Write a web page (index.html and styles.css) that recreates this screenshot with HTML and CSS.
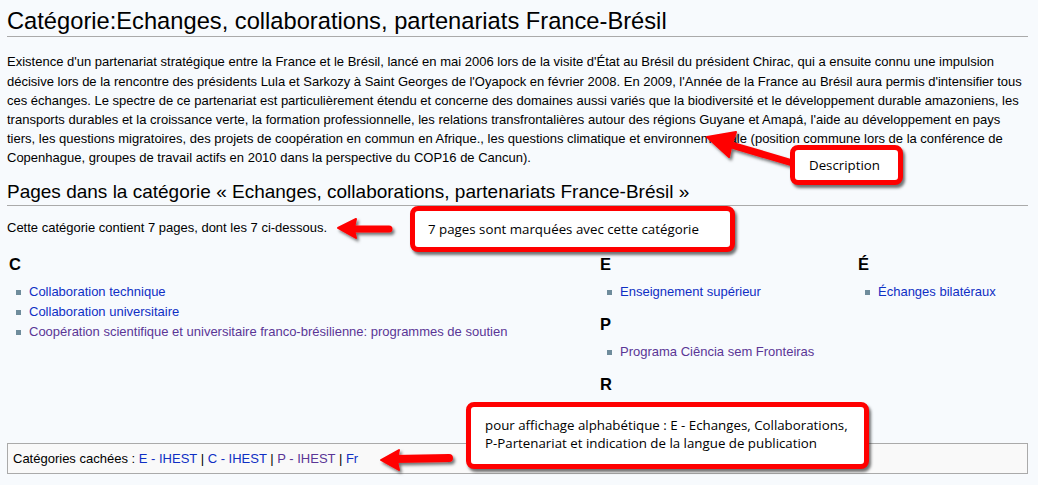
FILE: index.html
```html
<!DOCTYPE html>
<html lang="fr">
<head>
<meta charset="utf-8">
<title>Catégorie:Echanges, collaborations, partenariats France-Brésil</title>
<link rel="stylesheet" href="styles.css">
</head>
<body>
<div class="page">
  <h1 class="title">Catégorie:Echanges, collaborations, partenariats France-Brésil</h1>
  <p class="desc">Existence d'un partenariat stratégique entre la France et le Brésil, lancé en mai 2006 lors de la visite d'État au Brésil du président Chirac, qui a ensuite connu une impulsion décisive lors de la rencontre des présidents Lula et Sarkozy à Saint Georges de l'Oyapock en février 2008. En 2009, l'Année de la France au Brésil aura permis d'intensifier tous ces échanges. Le spectre de ce partenariat est particulièrement étendu et concerne des domaines aussi variés que la biodiversité et le développement durable amazoniens, les transports durables et la croissance verte, la formation professionnelle, les relations transfrontalières autour des régions Guyane et Amapá, l'aide au développement en pays tiers, les questions migratoires, des projets de coopération en commun en Afrique., les questions climatique et environnementale (position commune lors de la conférence de Copenhague, groupes de travail actifs en 2010 dans la perspective du COP16 de Cancun).</p>
  <h2 class="sub">Pages dans la catégorie « Echanges, collaborations, partenariats France-Brésil »</h2>
  <p class="count">Cette catégorie contient 7 pages, dont les 7 ci-dessous.</p>
  <div class="cols">
    <div class="col">
      <h3 class="letter">C</h3>
      <ul class="items">
        <li><a class="link" href="#">Collaboration technique</a></li>
        <li><a class="link" href="#">Collaboration universitaire</a></li>
        <li><a class="link visited" href="#">Coopération scientifique et universitaire franco-brésilienne: programmes de soutien</a></li>
      </ul>
    </div>
    <div class="col">
      <h3 class="letter">E</h3>
      <ul class="items">
        <li><a class="link" href="#">Enseignement supérieur</a></li>
      </ul>
      <h3 class="letter">P</h3>
      <ul class="items">
        <li><a class="link visited" href="#">Programa Ciência sem Fronteiras</a></li>
      </ul>
      <h3 class="letter">R</h3>
    </div>
    <div class="col">
      <h3 class="letter">É</h3>
      <ul class="items">
        <li><a class="link" href="#">Échanges bilatéraux</a></li>
      </ul>
    </div>
  </div>
  <div class="catlinks">Catégories cachées : <a class="link" href="#">E - IHEST</a> | <a class="link" href="#">C - IHEST</a> | <a class="link visited" href="#">P - IHEST</a> | <a class="link" href="#">Fr</a></div>

  <svg class="arrows" width="1038" height="485" viewBox="0 0 1038 485" xmlns="http://www.w3.org/2000/svg">
    <defs>
      <filter id="sh" x="-20%" y="-50%" width="140%" height="200%">
        <feDropShadow dx="2" dy="2.5" stdDeviation="1.5" flood-color="#000" flood-opacity="0.55"/>
      </filter>
    </defs>
    <g filter="url(#sh)" fill="#ff0000" stroke="#ff0000" stroke-linecap="round" stroke-linejoin="round">
      <line x1="796" y1="164" x2="728" y2="144" stroke-width="7"/>
      <path d="M707 137 L736 132 Q731 144 729 157 Z" stroke-width="2"/>
      <line x1="352" y1="229" x2="389" y2="229" stroke-width="7"/>
      <path d="M338 228 L356 219 Q353 229 356 238 Z" stroke-width="2"/>
      <line x1="394" y1="459" x2="449" y2="458" stroke-width="8"/>
      <path d="M381 460 L399 450 Q396 460 399 470 Z" stroke-width="2"/>
    </g>
  </svg>

  <div class="note note-desc">Description</div>
  <div class="note note-count">7 pages sont marquées avec cette catégorie</div>
  <div class="note note-alpha">pour affichage alphabétique : E - Echanges, Collaborations,<br>P-Partenariat et indication de la langue de publication</div>
</div>
</body>
</html>
```
FILE: styles.css
```css
html, body {
  margin: 0;
  padding: 0;
  background: #f7fafd;
}

.page {
  position: relative;
  width: 1038px;
  height: 485px;
  box-sizing: border-box;
  padding: 7px 10px 0 7px;
  overflow: hidden;
  font-family: "Liberation Sans", Arial, sans-serif;
  font-size: 13px;
  color: #000;
}

.title {
  margin: 0;
  font-size: 23.7px;
  font-weight: normal;
  line-height: 29px;
  border-bottom: 1px solid #aaa;
}

.desc {
  margin: 15.4px 0 0;
  line-height: 19.2px;
}

.sub {
  margin: 12.4px 0 0;
  font-size: 19px;
  font-weight: normal;
  line-height: 24px;
  padding-bottom: 1px;
  border-bottom: 1px solid #aaa;
}

.count {
  margin: 12px 0 0;
  line-height: 20px;
}

.cols {
  display: grid;
  grid-template-columns: 591px 258px 1fr;
  margin-top: 16px;
  padding-left: 2px;
}

.letter {
  margin: 0 0 7px;
  font-size: 16.5px;
  font-weight: bold;
  line-height: 20px;
}

.items {
  list-style: none;
  margin: 0 0 13px;
  padding: 0;
}

.items li {
  line-height: 20px;
  padding-top: 1px;
  margin-bottom: -1px;
}

.items li::before {
  content: "";
  display: inline-block;
  width: 5px;
  height: 5px;
  background: #6f8c9c;
  margin: 0 8px 0 7px;
  vertical-align: middle;
}

.link {
  color: #0f2fc4;
  text-decoration: none;
}

.link.visited {
  color: #5a3696;
}

.catlinks {
  margin-top: 42px;
  border: 1px solid #aaa;
  background: #f9f9f9;
  padding: 5px;
  line-height: 19px;
}

.arrows {
  position: absolute;
  left: 0;
  top: 0;
  pointer-events: none;
}

.note {
  position: absolute;
  box-sizing: border-box;
  background: #fff;
  border: 5px solid #ff0000;
  border-radius: 8px;
  box-shadow: 2px 3px 3px rgba(0, 0, 0, 0.55);
  font-family: "Open Sans", "Noto Sans", sans-serif;
  font-size: 13.3px;
  color: #000;
  white-space: nowrap;
}

.note-desc {
  left: 790px;
  top: 145px;
  width: 113px;
  height: 40px;
  padding-left: 14px;
  line-height: 30px;
}

.note-count {
  left: 410px;
  top: 206px;
  width: 325px;
  height: 46px;
  padding-left: 13px;
  line-height: 36px;
}

.note-alpha {
  left: 466px;
  top: 402px;
  width: 403px;
  height: 67px;
  padding: 9px 0 0 14px;
  line-height: 18px;
}
```
